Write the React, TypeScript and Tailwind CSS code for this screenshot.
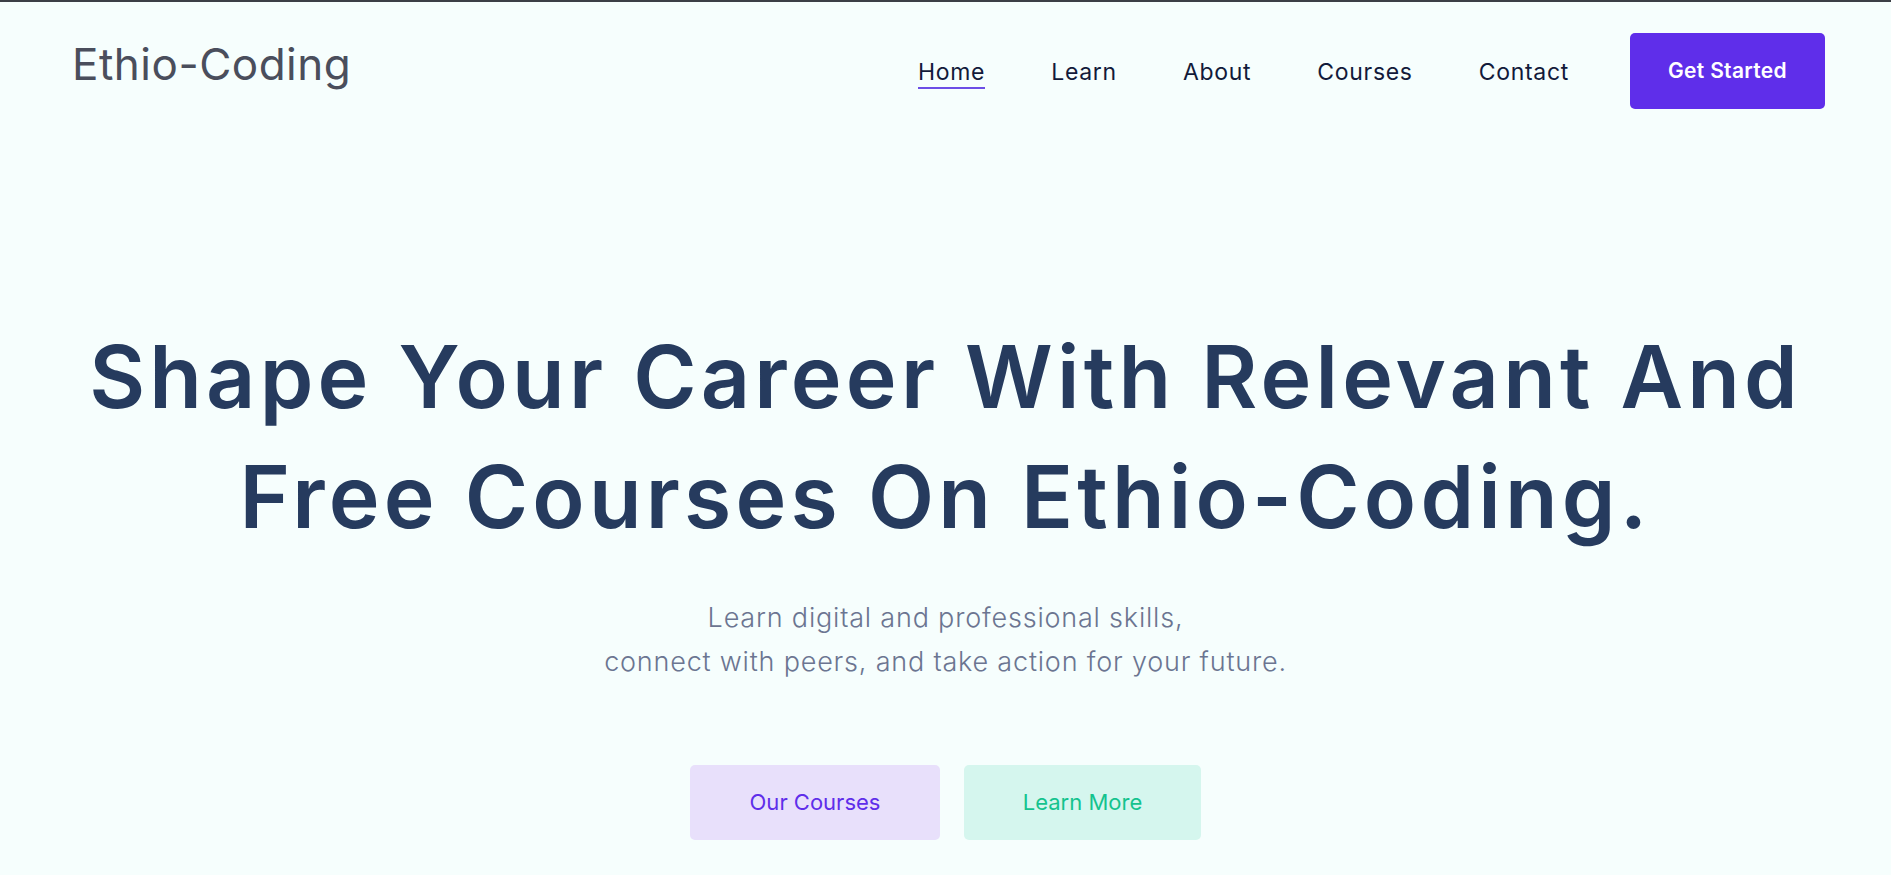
import React from 'react';

// --- Navegação ---
const links = ['Home', 'Learn', 'About', 'Courses', 'Contact'];

function Header() {
  return (
    <header className="flex items-start justify-between pl-[72px] pr-[66px] pt-[31px]">
      <a href="#" className="mt-[1px] text-[44px] leading-[60px] text-[#4a4e5c] tracking-[0.5px]">
        Ethio-Coding
      </a>
      <nav className="flex items-start">
        <ul className="flex items-start gap-[66px] pt-[26px]">
          {links.map((link, i) => (
            <li key={link}>
              <a
                href="#"
                className={
                  i === 0
                    ? 'block pb-[2px] text-[23px] leading-[26px] tracking-[0.7px] text-[#121a3a] border-b-2 border-[#6c4ee6]'
                    : 'block pb-[2px] text-[23px] leading-[26px] tracking-[0.7px] text-[#121a3a] border-b-2 border-transparent'
                }
              >
                {link}
              </a>
            </li>
          ))}
        </ul>
        <button className="ml-[61px] w-[195px] h-[76px] rounded-[5px] bg-[#5f2eea] text-white text-[21px] font-semibold tracking-[0.3px]">
          Get Started
        </button>
      </nav>
    </header>
  );
}

function Hero() {
  return (
    <main className="flex flex-col items-center text-center">
      <h1 className="mt-[208px] text-[86px] leading-[120px] font-semibold tracking-[4.2px] text-[#263b5e]">
        Shape Your Career With Relevant And
        <br />
        Free Courses On Ethio-Coding.
      </h1>
      <p className="mt-[39px] text-[27px] leading-[44px] font-light tracking-[0.8px] text-[#6b7591]">
        Learn digital and professional skills,
        <br />
        connect with peers, and take action for your future.
      </p>
      <div className="mt-[81px] flex gap-[24px]">
        <button className="w-[250px] h-[75px] rounded-[5px] bg-[#e8e0fb] text-[#5f2eea] text-[22px]">
          Our Courses
        </button>
        <button className="w-[237px] h-[75px] rounded-[5px] bg-[#d5f6ee] text-[#14c38e] text-[22px]">
          Learn More
        </button>
      </div>
    </main>
  );
}

export default function App() {
  return (
    <div className="min-h-screen w-full bg-[#f6fefd] border-t-2 border-[#3c3f46] font-['Inter',sans-serif]">
      <Header />
      <Hero />
    </div>
  );
}
